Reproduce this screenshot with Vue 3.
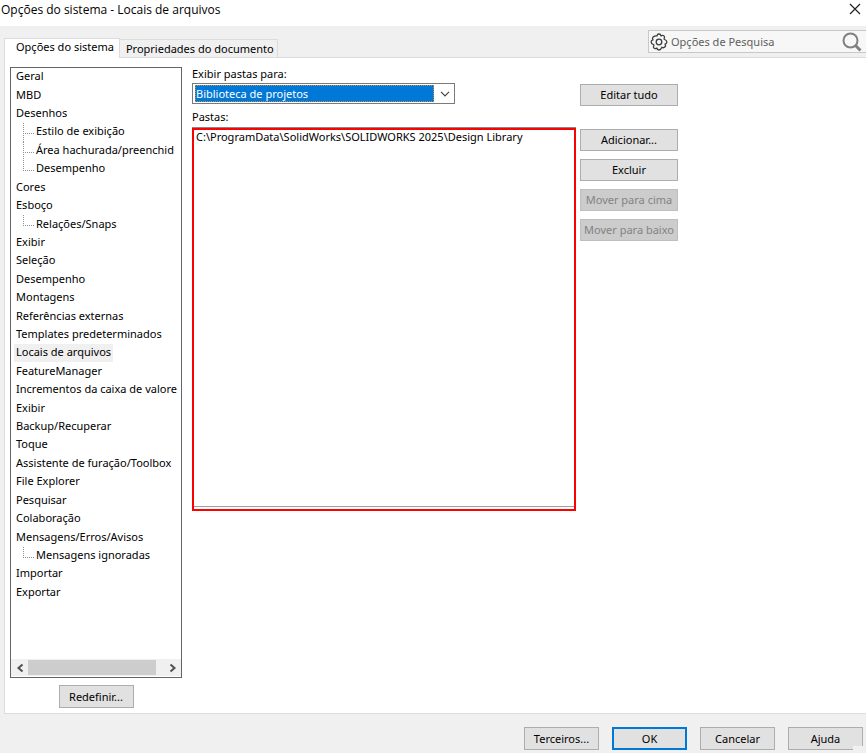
<script setup>
import { ref } from 'vue'

const tabs = ['Opções do sistema', 'Propriedades do documento']
const activeTab = ref(tabs[0])

const pages = [
  { id: 1, name: 'Geral' },
  { id: 2, name: 'MBD' },
  { id: 3, name: 'Desenhos' },
  { id: 4, name: 'Estilo de exibição', child: true },
  { id: 5, name: 'Área hachurada/preenchid', child: true },
  { id: 6, name: 'Desempenho', child: true, last: true },
  { id: 7, name: 'Cores' },
  { id: 8, name: 'Esboço' },
  { id: 9, name: 'Relações/Snaps', child: true, last: true },
  { id: 10, name: 'Exibir' },
  { id: 11, name: 'Seleção' },
  { id: 12, name: 'Desempenho' },
  { id: 13, name: 'Montagens' },
  { id: 14, name: 'Referências externas' },
  { id: 15, name: 'Templates predeterminados' },
  { id: 16, name: 'Locais de arquivos' },
  { id: 17, name: 'FeatureManager' },
  { id: 18, name: 'Incrementos da caixa de valore' },
  { id: 19, name: 'Exibir' },
  { id: 20, name: 'Backup/Recuperar' },
  { id: 21, name: 'Toque' },
  { id: 22, name: 'Assistente de furação/Toolbox' },
  { id: 23, name: 'File Explorer' },
  { id: 24, name: 'Pesquisar' },
  { id: 25, name: 'Colaboração' },
  { id: 26, name: 'Mensagens/Erros/Avisos' },
  { id: 27, name: 'Mensagens ignoradas', child: true, last: true },
  { id: 28, name: 'Importar' },
  { id: 29, name: 'Exportar' },
]
const selectedPage = ref(16)

const category = ref('Biblioteca de projetos')
const folders = ['C:\\ProgramData\\SolidWorks\\SOLIDWORKS 2025\\Design Library']
const search = ref('')
</script>

<template>
  <div class="dialog">
    <header class="titlebar">
      <h1>Opções do sistema - Locais de arquivos</h1>
      <button class="close" type="button" aria-label="Fechar">
        <svg width="12" height="12" viewBox="0 0 12 12"><path d="M1 1 11 11M11 1 1 11" fill="none" stroke="#222" stroke-width="1.2" /></svg>
      </button>
    </header>

    <div class="topbar">
      <div class="tabs" role="tablist">
        <button
          v-for="tab in tabs"
          :key="tab"
          type="button"
          role="tab"
          class="tab"
          :class="{ active: tab === activeTab }"
          :aria-selected="tab === activeTab"
          @click="activeTab = tab"
        >{{ tab }}</button>
      </div>
      <div class="search">
        <svg width="18" height="18" viewBox="0 0 18 18" fill="none" stroke="#3c3c3c" stroke-width="1.3" stroke-linejoin="round">
          <path d="M7 2.900Q7.300 1 9 1t2 1.900q1.800-1.200 3 0t0 3.100Q16.900 7.300 16.900 9T15 11.100q1.200 1.800-.1 3t-3 .1Q10.700 17 9 17t-2-1.900q-1.800 1.200-3 0t0-3.100Q1.100 10.700 1.100 9T3 6.900q-1.200-1.800.1-3T7 2.900z" />
          <circle cx="9" cy="9" r="2.800" />
        </svg>
        <input v-model="search" type="text" placeholder="Opções de Pesquisa" aria-label="Opções de Pesquisa">
        <button type="button" aria-label="Pesquisar">
          <svg width="20" height="20" viewBox="0 0 20 20" fill="none" stroke="#808080"><circle cx="8.500" cy="8.500" r="7" stroke-width="2" /><path d="m13.500 13.500 5 5" stroke-width="3" /></svg>
        </button>
      </div>
    </div>

    <main class="panel">
      <nav class="side" aria-label="Páginas de opções">
        <div class="tree-box">
          <ul class="tree">
            <li v-for="page in pages" :key="page.id" :class="{ child: page.child, last: page.last }">
              <button type="button" :class="{ selected: page.id === selectedPage }" @click="selectedPage = page.id">{{ page.name }}</button>
            </li>
          </ul>
          <div class="scrollbar">
            <button type="button" aria-label="Rolar para a esquerda">
              <svg width="8" height="10" viewBox="0 0 8 10"><path d="M6.500 1.500 2.500 5l4 3.500" fill="none" stroke="#505050" stroke-width="2" /></svg>
            </button>
            <div class="track"><div class="thumb"></div></div>
            <button type="button" aria-label="Rolar para a direita">
              <svg width="8" height="10" viewBox="0 0 8 10"><path d="M1.500 1.500 5.500 5l-4 3.500" fill="none" stroke="#505050" stroke-width="2" /></svg>
            </button>
          </div>
        </div>
        <button type="button" class="btn reset">Redefinir...</button>
      </nav>

      <section class="content">
        <label for="category">Exibir pastas para:</label>
        <div class="combo">
          <select id="category" v-model="category">
            <option>Biblioteca de projetos</option>
          </select>
          <svg width="10" height="6" viewBox="0 0 10 6"><path d="m1 .8 4 4 4-4" fill="none" stroke="#444" stroke-width="1.200" /></svg>
        </div>
        <span id="folders-label" class="folders-label">Pastas:</span>
        <ul class="folders" role="listbox" aria-labelledby="folders-label">
          <li v-for="folder in folders" :key="folder" role="option">{{ folder }}</li>
        </ul>
      </section>

      <div class="actions">
        <button type="button" class="btn edit">Editar tudo</button>
        <button type="button" class="btn">Adicionar...</button>
        <button type="button" class="btn">Excluir</button>
        <button type="button" class="btn" disabled>Mover para cima</button>
        <button type="button" class="btn" disabled>Mover para baixo</button>
      </div>
    </main>

    <footer class="footer">
      <button type="button" class="btn">Terceiros...</button>
      <button type="button" class="btn primary">OK</button>
      <button type="button" class="btn">Cancelar</button>
      <button type="button" class="btn">Ajuda</button>
      <span class="grip"></span>
    </footer>
  </div>
</template>

<style>
body {
  margin: 0;
  background: #f0f0f0;
}
</style>

<style scoped>
.dialog {
  display: flex;
  flex-direction: column;
  min-height: 100vh;
  background: #f0f0f0;
  color: #000;
  font: 11px/16px "Noto Sans", "Open Sans", sans-serif;
}
.dialog * {
  box-sizing: border-box;
}
button,
input,
select {
  margin: 0;
  padding: 0;
  border: 0;
  background: none;
  color: inherit;
  font: inherit;
}
ul {
  margin: 0;
  padding: 0;
  list-style: none;
}
svg {
  display: block;
  flex: none;
}
.titlebar {
  display: flex;
  justify-content: space-between;
  height: 26px;
  padding: 2px 5px 0 1px;
  background: #fff;
}
h1 {
  margin: 0;
  font: 12px/16px "Open Sans", "Noto Sans", sans-serif;
}
.close {
  height: 14px;
}
.topbar {
  display: flex;
  justify-content: space-between;
  height: 31px;
}
.tabs {
  display: flex;
  align-items: flex-end;
  padding-left: 4px;
}
.tab {
  height: 18px;
  padding: 0 3px 0 6px;
  border: 1px solid #dcdcdc;
  border-bottom: 0;
  border-left: 0;
  white-space: nowrap;
}
.tab.active {
  height: 20px;
  margin-bottom: -1px;
  padding: 0 5px 3px 11px;
  border-left: 1px solid #dcdcdc;
  background: #fff;
  z-index: 1;
}
.search {
  display: flex;
  align-items: center;
  width: 218px;
  height: 23px;
  margin-top: 4px;
  padding: 0 4px 0 1px;
  border: 1px solid #c8c8c8;
  border-right: 0;
  background: #f7f7f7;
}
.search input {
  flex: 1;
  min-width: 0;
  margin-left: 3px;
  outline: 0;
}
.search input::placeholder {
  color: #606060;
  opacity: 1;
}
.panel {
  display: grid;
  grid-template-columns: 172px minmax(0, 394px) 102px;
  flex: 1;
  margin-left: 4px;
  padding: 9px 0 5px 5px;
  border: 1px solid #dcdcdc;
  border-right: 0;
  background: #fff;
}
.side {
  display: flex;
  flex-direction: column;
}
.tree-box {
  display: flex;
  flex: 1;
  flex-direction: column;
  justify-content: space-between;
  border: 1px solid #646464;
}
.tree {
  display: grid;
  grid-auto-rows: 1fr;
  height: 534px;
  overflow: hidden;
}
.tree li {
  display: flex;
  align-items: center;
  padding-left: 3px;
}
.tree button {
  padding: 0 2px 2px;
  white-space: nowrap;
}
.tree .selected {
  background: #f0f0f0;
}
.tree .child {
  align-items: stretch;
  padding-left: 12px;
}
.child::before {
  flex: none;
  width: 10px;
  height: 10px;
  border-bottom: 1px dotted #909090;
  border-left: 1px dotted #909090;
  content: "";
}
.child:not(.last) {
  background: repeating-linear-gradient(#909090 0 1px, transparent 1px 2px) 12px 0 / 1px 100% no-repeat;
}
.scrollbar {
  display: flex;
  height: 17px;
  margin-bottom: 1px;
  background: #f0f0f0;
}
.scrollbar button {
  display: grid;
  flex: none;
  place-items: center;
  width: 17px;
}
.track {
  flex: 1;
}
.thumb {
  width: 94%;
  height: 15px;
  margin-top: 1px;
  background: #cdcdcd;
}
.btn {
  height: 22px;
  border: 1px solid #adadad;
  background: #e1e1e1;
  text-align: center;
  white-space: nowrap;
}
.btn:disabled {
  border-color: #bfbfbf;
  background: #ccc;
  color: #838383;
}
.reset {
  align-self: center;
  width: 75px;
  height: 23px;
  margin-top: 7px;
}
.content {
  display: flex;
  flex-direction: column;
  padding-left: 10px;
}
.content label {
  margin-top: -1px;
}
.combo {
  display: flex;
  align-items: center;
  width: 263px;
  height: 21px;
  margin-top: 1px;
  padding: 2px 4px 2px 2px;
  border: 1px solid #7a7a7a;
  gap: 6px;
}
.combo select {
  flex: 1;
  height: 17px;
  border: 1px dotted #d08a40;
  background: #0078d7;
  color: #fff;
  line-height: 15px;
  appearance: none;
  outline: 0;
}
.folders-label {
  margin-top: 5px;
}
.folders {
  height: 383px;
  margin-top: 3px;
  padding: 0 2px;
  border: 2px solid #f00;
  box-shadow: 0 -1px #828790, inset 0 -2px #fff, inset 0 -3px #a0a0a8;
  line-height: 14px;
}
.actions {
  display: flex;
  flex-direction: column;
  gap: 8px;
  padding: 17px 0 0 4px;
}
.edit {
  margin-bottom: 15px;
}
.footer {
  display: flex;
  position: relative;
  justify-content: flex-end;
  gap: 13px;
  height: 39px;
  padding: 13px 3px 0 0;
}
.footer .btn {
  width: 75px;
  height: 23px;
}
.footer .primary {
  border: 2px solid #0078d7;
}
.grip {
  position: absolute;
  right: 3px;
  bottom: 2px;
  width: 10px;
  height: 5px;
  background: #f0f0f0;
}
</style>
